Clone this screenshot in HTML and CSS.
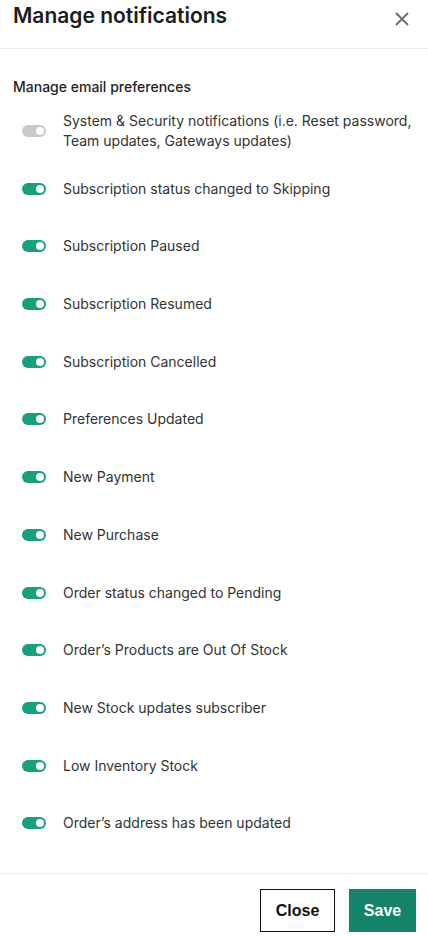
FILE: index.html
```html
<!DOCTYPE html>
<html lang="en">
<head>
<meta charset="utf-8">
<title>Manage notifications</title>
<link rel="stylesheet" href="styles.css">
</head>
<body>
<div class="modal">
  <header class="modal-header">
    <h1 class="modal-title">Manage notifications</h1>
    <button class="icon-close" aria-label="Close">
      <svg width="14" height="14" viewBox="0 0 14 14"><path d="M1 1L13 13M13 1L1 13" stroke="#6b6b6b" stroke-width="1.8" fill="none"/></svg>
    </button>
  </header>
  <main class="modal-body">
    <h2 class="section-title">Manage email preferences</h2>
    <ul class="pref-list">
      <li class="pref"><span class="toggle toggle-disabled"><span class="knob"></span></span><span class="pref-label">System &amp; Security notifications (i.e. Reset password, Team updates, Gateways updates)</span></li>
      <li class="pref"><span class="toggle"><span class="knob"></span></span><span class="pref-label">Subscription status changed to Skipping</span></li>
      <li class="pref"><span class="toggle"><span class="knob"></span></span><span class="pref-label">Subscription Paused</span></li>
      <li class="pref"><span class="toggle"><span class="knob"></span></span><span class="pref-label">Subscription Resumed</span></li>
      <li class="pref"><span class="toggle"><span class="knob"></span></span><span class="pref-label">Subscription Cancelled</span></li>
      <li class="pref"><span class="toggle"><span class="knob"></span></span><span class="pref-label">Preferences Updated</span></li>
      <li class="pref"><span class="toggle"><span class="knob"></span></span><span class="pref-label">New Payment</span></li>
      <li class="pref"><span class="toggle"><span class="knob"></span></span><span class="pref-label">New Purchase</span></li>
      <li class="pref"><span class="toggle"><span class="knob"></span></span><span class="pref-label">Order status changed to Pending</span></li>
      <li class="pref"><span class="toggle"><span class="knob"></span></span><span class="pref-label">Order’s Products are Out Of Stock</span></li>
      <li class="pref"><span class="toggle"><span class="knob"></span></span><span class="pref-label">New Stock updates subscriber</span></li>
      <li class="pref"><span class="toggle"><span class="knob"></span></span><span class="pref-label">Low Inventory Stock</span></li>
      <li class="pref"><span class="toggle"><span class="knob"></span></span><span class="pref-label">Order’s address has been updated</span></li>
    </ul>
  </main>
  <footer class="modal-footer">
    <button class="btn btn-outline">Close</button>
    <button class="btn btn-primary">Save</button>
  </footer>
</div>
</body>
</html>
```

FILE: styles.css
```css
html, body {
  margin: 0;
  padding: 0;
  background: #ffffff;
}
body {
  font-family: Inter, "Noto Sans", sans-serif;
  color: #2b2b2b;
}
.modal {
  display: flex;
  flex-direction: column;
  height: 100vh;
  box-sizing: border-box;
}
.modal-header {
  display: flex;
  justify-content: space-between;
  align-items: flex-start;
  height: 49px;
  box-sizing: border-box;
  padding: 2px 19px 0 13px;
  border-bottom: 1px solid #ececec;
}
.modal-title {
  margin: 0;
  font-size: 21px;
  line-height: 28px;
  font-weight: 600;
  color: #1c1c1c;
}
.icon-close {
  border: 0;
  background: none;
  padding: 0;
  margin-top: 10px;
  width: 14px;
  height: 14px;
  display: flex;
}
.modal-body {
  flex: 1;
  padding: 28px 13px 0 22px;
}
.section-title {
  margin: 0 0 14px -9px;
  font-size: 14px;
  line-height: 20px;
  font-weight: 500;
  color: #1f1f1f;
}
.pref-list {
  list-style: none;
  margin: 0;
  padding: 0;
  display: flex;
  flex-direction: column;
  gap: 17.7px;
}
.pref {
  display: flex;
  align-items: center;
  min-height: 40px;
}
.toggle {
  flex: none;
  width: 24px;
  height: 12px;
  border-radius: 6px;
  background: #17a07b;
  display: flex;
  align-items: center;
  justify-content: flex-end;
  padding: 0 2px;
  box-sizing: border-box;
  margin-right: 17px;
}
.toggle-disabled {
  background: #c9c9c9;
}
.knob {
  width: 8px;
  height: 8px;
  border-radius: 50%;
  background: #ffffff;
}
.pref-label {
  font-size: 14px;
  line-height: 20px;
  color: #333333;
}
.modal-footer {
  display: flex;
  justify-content: flex-end;
  gap: 14px;
  padding: 15px 12px 4px;
  border-top: 1px solid #ececec;
}
.btn {
  height: 43px;
  font-family: "Liberation Sans", Arial, sans-serif;
  font-weight: 700;
  font-size: 16px;
  cursor: pointer;
}
.btn-outline {
  width: 75px;
  background: #ffffff;
  border: 1px solid #111111;
  color: #111111;
}
.btn-primary {
  width: 67px;
  background: #14836a;
  border: 1px solid #14836a;
  color: #ffffff;
}
```
